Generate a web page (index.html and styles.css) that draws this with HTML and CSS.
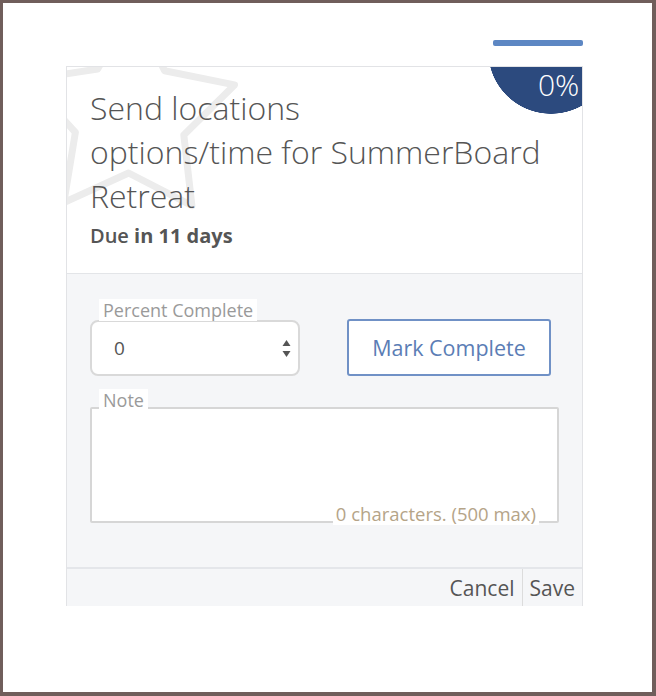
FILE: index.html
```html
<!DOCTYPE html>
<html lang="en">
<head>
  <meta charset="UTF-8">
  <title>Task</title>
  <link rel="stylesheet" href="styles.css">
</head>
<body>
  <div class="frame">
    <div class="task">
      <div class="task-progress"></div>
      <div class="card">
        <div class="card-head">
          <svg class="card-star" width="200" height="160" viewBox="0 0 200 160">
            <polygon points="65.7,-60 97.6,3.7 167.5,17.9 116.8,67.9 124.9,138.7 61.6,106 -3.2,135.6 8.4,65.3 -39.8,12.8 30.6,2.1" />
          </svg>
          <div class="pct-badge">0%</div>
          <h2 class="task-title">Send locations options/time for SummerBoard Retreat</h2>
          <div class="task-due">Due <strong>in 11 days</strong></div>
        </div>

        <div class="card-form">
          <div class="form-row">
            <div class="field field-select">
              <label>Percent Complete</label>
              <div class="select-box">
                <span>0</span>
                <svg class="spinner" width="9" height="19" viewBox="0 0 9 19">
                  <path d="M4.5 1 L8.5 7 L0.5 7 Z" />
                  <path d="M0.5 12 L8.5 12 L4.5 18 Z" />
                </svg>
              </div>
            </div>
            <button class="btn-outline">Mark Complete</button>
          </div>

          <div class="field field-note">
            <label>Note</label>
            <div class="note-box"></div>
            <span class="char-count">0 characters. (500 max)</span>
          </div>
        </div>

        <div class="card-foot">
          <button class="foot-btn">Cancel</button>
          <button class="foot-btn foot-save">Save</button>
        </div>
      </div>
    </div>
  </div>
</body>
</html>
```

FILE: styles.css
```css
* { box-sizing: border-box; }
body {
  margin: 0;
  font-family: 'Open Sans', 'Liberation Sans', sans-serif;
  background: #fff;
}
.frame {
  height: 696px;
  border-style: solid;
  border-color: #705e5b;
  border-width: 3px 4px 4px 3px;
  background: #fff;
  overflow: hidden;
}
.task {
  width: 517px;
  margin: 37px 0 0 63px;
}
.task-progress {
  width: 90px;
  height: 6px;
  margin: 0 0 20px auto;
  background: #5d87c3;
  border-radius: 2px;
}
.card {
  border: 1px solid #e2e3e6;
  border-bottom: none;
}

/* header */
.card-head {
  position: relative;
  padding: 19px 23px 25px 23px;
  border-bottom: 1px solid #e3e5e8;
  background: #fff;
}
.card-star {
  position: absolute;
  left: 0;
  top: 0;
  fill: none;
  stroke: #ececec;
  stroke-width: 7;
  stroke-linejoin: round;
}
/* the visible part of a 126px circle centred above the card corner */
.pct-badge {
  position: relative;
  float: right;
  width: 94px;
  height: 47px;
  margin: -19px -23px 0 12px;
  padding: 3px 0 0 50px;
  background: radial-gradient(circle 63px at 63px -16px, #2c4a7e 62.5px, transparent 63px);
  color: #fff;
  font-size: 30px;
  font-weight: 300;
  line-height: 30px;
  white-space: nowrap;
}
.task-title {
  position: relative;
  margin: 0;
  font-size: 32px;
  font-weight: 300;
  line-height: 44px;
  color: #555;
}
.task-due {
  position: relative;
  margin-top: 6px;
  font-size: 20px;
  line-height: 24px;
  font-weight: 600;
  color: #555;
}
.task-due strong { font-weight: 700; }

/* form */
.card-form {
  background: #f5f6f8;
  padding: 46px 23px 44px 23px;
}
.form-row {
  display: flex;
  align-items: flex-start;
  gap: 47px;
}
.field {
  position: relative;
}
.field label {
  position: absolute;
  left: 9px;
  top: -21px;
  padding: 0 4px;
  background: #fff;
  color: #9a9a9a;
  font-size: 18px;
  line-height: 22px;
}
.select-box {
  width: 210px;
  height: 56px;
  display: flex;
  align-items: center;
  justify-content: space-between;
  padding: 0 7px 0 22px;
  border: 2px solid #d9d9d9;
  border-radius: 8px;
  background: #fff;
  font-size: 19px;
  color: #555;
}
.spinner { fill: #555; }
.btn-outline {
  width: 204px;
  height: 57px;
  margin-top: -1px;
  padding: 0;
  border: 2px solid #7091c6;
  border-radius: 3px;
  background: #fff;
  color: #5b7db5;
  font-family: inherit;
  font-size: 21.5px;
}
.field-note {
  margin-top: 31px;
}
.field-note label {
  top: -18px;
}
.note-box {
  height: 116px;
  border: 2px solid #d6d6d6;
  border-radius: 2px;
  background: #fff;
}
.char-count {
  position: absolute;
  right: 20px;
  bottom: -2px;
  padding: 0 3px;
  background: #fff;
  color: #b5a488;
  font-size: 18.5px;
  line-height: 22px;
}

/* footer */
.card-foot {
  display: flex;
  justify-content: flex-end;
  height: 39px;
  border-top: 2px solid #e4e6ea;
  background: #f5f6f8;
}
.foot-btn {
  padding: 0 7px;
  border: none;
  background: none;
  font-family: inherit;
  font-size: 21px;
  color: #555;
}
.foot-save {
  border-left: 1px solid #dcdcdc;
}
```
